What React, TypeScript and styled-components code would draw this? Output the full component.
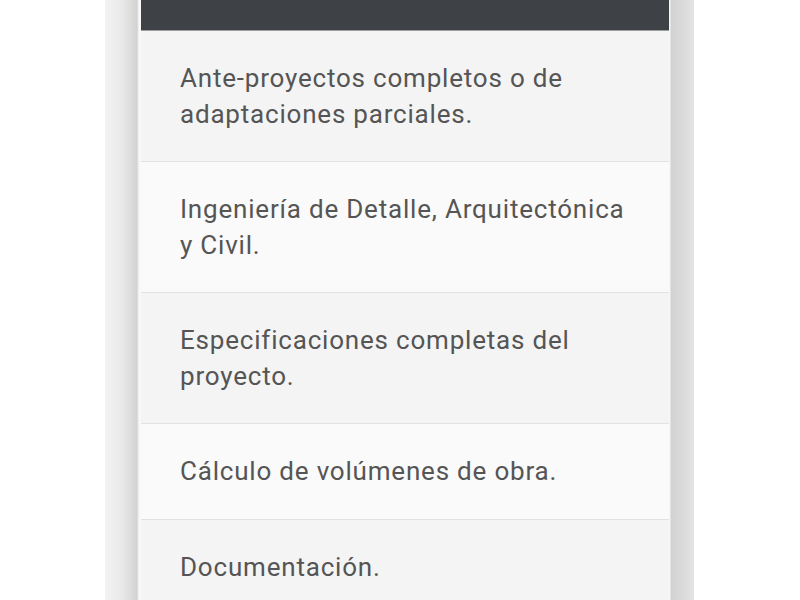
import React from "react";
import styled, { createGlobalStyle } from "styled-components";

const GlobalStyle = createGlobalStyle`
  html, body {
    margin: 0;
    padding: 0;
    background: #ffffff;
    font-family: Roboto, "Noto Sans", "Liberation Sans", sans-serif;
  }
`;

const Page = styled.main`
  width: 800px;
  height: 600px;
  overflow: hidden;
  background: #ffffff;
`;

// gray column behind the card, shaded like a drop shadow
const Frame = styled.section`
  width: 589px;
  height: 600px;
  margin-left: 105px;
  padding: 0 25px 0 36px;
  box-sizing: border-box;
  background: linear-gradient(
    to right,
    #f3f3f3 0px,
    #e8e8e8 18px,
    #d2d2d2 32px,
    #f8f8f8 34px,
    #f8f8f8 36px,
    #f8f8f8 564px,
    #f6f6f6 565px,
    #d2d2d2 566px,
    #dcdcdc 580px,
    #e4e4e4 589px
  );
`;

const Card = styled.div`
  width: 528px;
  display: flex;
  flex-direction: column;
`;

const Header = styled.div`
  height: 31px;
  background: #3e4145;
  border-bottom: 1px solid #9a9c9e;
  box-sizing: border-box;
`;

const Item = styled.div<{ $alt?: boolean }>`
  padding: 30px 40px 29px 39px;
  background: ${(p) => (p.$alt ? "#fafafa" : "#f4f4f4")};
  border-bottom: 1px solid #e2e2e2;
  color: #555555;
  font-size: 26px;
  letter-spacing: 0.8px;
  line-height: 35.5px;
`;

const items = [
  "Ante-proyectos completos o de adaptaciones parciales.",
  "Ingeniería de Detalle, Arquitectónica y Civil.",
  "Especificaciones completas del proyecto.",
  "Cálculo de volúmenes de obra.",
  "Documentación.",
];

const App: React.FC = () => {
  return (
    <>
      <GlobalStyle />
      <Page>
        <Frame>
          <Card>
            <Header />
            {items.map((text, i) => (
              <Item key={text} $alt={i % 2 === 1}>
                {text}
              </Item>
            ))}
          </Card>
        </Frame>
      </Page>
    </>
  );
};

export default App;
